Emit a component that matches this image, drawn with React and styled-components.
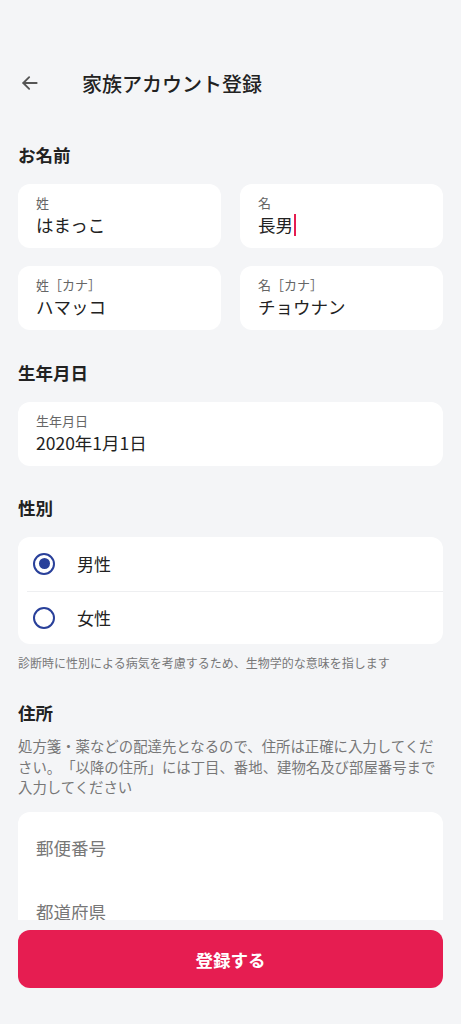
import React, { useState } from 'react';
import styled, { createGlobalStyle } from 'styled-components';

const GlobalStyle = createGlobalStyle`
  html, body {
    margin: 0;
    padding: 0;
    background: #f4f5f7;
  }
  body {
    font-family: "Noto Sans CJK JP", "Noto Sans", sans-serif;
    color: #222;
    text-spacing-trim: space-all;
  }
  * { box-sizing: border-box; }
`;

const App = () => {
    const [gender, setGender] = useState('male');

    return (
        <Page>
            <GlobalStyle />
            <Scroll>
                <Header>
                    <BackButton aria-label="戻る">
                        <svg width="20" height="20" viewBox="0 0 24 24" fill="none" stroke="#555" strokeWidth="2.2" strokeLinecap="round" strokeLinejoin="round">
                            <path d="M20 12H4" />
                            <path d="M11 5l-7 7 7 7" />
                        </svg>
                    </BackButton>
                    <HeaderTitle>家族アカウント登録</HeaderTitle>
                </Header>

                <Section $gap={32}>
                    <SectionTitle>お名前</SectionTitle>
                    <FieldGrid>
                        <Field>
                            <FieldLabel>姓</FieldLabel>
                            <FieldValue>はまっこ</FieldValue>
                        </Field>
                        <Field>
                            <FieldLabel>名</FieldLabel>
                            <FieldValue>長男<Caret /></FieldValue>
                        </Field>
                        <Field>
                            <FieldLabel>姓［カナ］</FieldLabel>
                            <FieldValue>ハマッコ</FieldValue>
                        </Field>
                        <Field>
                            <FieldLabel>名［カナ］</FieldLabel>
                            <FieldValue>チョウナン</FieldValue>
                        </Field>
                    </FieldGrid>
                </Section>

                <Section $gap={31}>
                    <SectionTitle>生年月日</SectionTitle>
                    <Field>
                        <FieldLabel>生年月日</FieldLabel>
                        <FieldValue>2020年1月1日</FieldValue>
                    </Field>
                </Section>

                <Section $gap={30}>
                    <SectionTitle>性別</SectionTitle>
                    <RadioCard>
                        <RadioRow onClick={() => setGender('male')}>
                            <RadioCircle $checked={gender === 'male'} />
                            <RadioLabel>男性</RadioLabel>
                        </RadioRow>
                        <RadioRow $divider onClick={() => setGender('female')}>
                            <RadioCircle $checked={gender === 'female'} />
                            <RadioLabel>女性</RadioLabel>
                        </RadioRow>
                    </RadioCard>
                    <Hint>診断時に性別による病気を考慮するため、生物学的な意味を指します</Hint>
                </Section>

                <Section $gap={29}>
                    <SectionTitle $tight>住所</SectionTitle>
                    <Description>
                        処方箋・薬などの配達先となるので、住所は正確に入力してください。「以降の住所」には丁目、番地、建物名及び部屋番号まで入力してください
                    </Description>
                    <AddressCard>
                        <Placeholder>郵便番号</Placeholder>
                        <Placeholder>都道府県</Placeholder>
                    </AddressCard>
                </Section>
            </Scroll>
            <Footer>
                <SubmitButton>登録する</SubmitButton>
            </Footer>
        </Page>
    );
};

const Page = styled.div`
  height: 100vh;
  display: flex;
  flex-direction: column;
  background: #f4f5f7;
`;

const Scroll = styled.div`
  flex: 1;
  overflow: hidden;
  padding: 55px 18px 0;
`;

const Header = styled.header`
  height: 56px;
  display: flex;
  align-items: center;
  gap: 42px;
  padding-left: 2px;
`;

const BackButton = styled.button`
  border: none;
  background: none;
  padding: 0;
  width: 20px;
  height: 20px;
  display: flex;
  align-items: center;
  justify-content: center;
`;

const HeaderTitle = styled.h1`
  margin: 0;
  font-size: 20px;
  font-weight: 500;
  color: #222;
`;

const Section = styled.section`
  margin-top: ${(p) => p.$gap}px;
`;

const SectionTitle = styled.h2`
  margin: 0 0 ${(p) => (p.$tight ? '11px' : '17px')};
  font-size: 17.5px;
  line-height: 24px;
  font-weight: 700;
  color: #222;
`;

const FieldGrid = styled.div`
  display: grid;
  grid-template-columns: 1fr 1fr;
  column-gap: 19px;
  row-gap: 18px;
`;

const Field = styled.div`
  height: 64px;
  background: #fff;
  border-radius: 12px;
  padding: 10px 18px 0;
`;

const FieldLabel = styled.div`
  font-size: 13px;
  line-height: 18px;
  color: #666;
`;

const FieldValue = styled.div`
  font-size: 17.5px;
  line-height: 26px;
  color: #222;
  display: flex;
  align-items: center;
`;

const Caret = styled.span`
  display: inline-block;
  width: 2px;
  height: 22px;
  margin-left: 1px;
  background: #e61d51;
`;

const RadioCard = styled.div`
  background: #fff;
  border-radius: 12px;
  overflow: hidden;
`;

const RadioRow = styled.label`
  height: 53.5px;
  display: flex;
  align-items: center;
  gap: 22px;
  margin-left: ${(p) => (p.$divider ? '9px' : '0')};
  padding-left: ${(p) => (p.$divider ? '6px' : '15px')};
  border-top: ${(p) => (p.$divider ? '1px solid #eeeff1' : 'none')};
  cursor: pointer;
`;

const RadioCircle = styled.span`
  width: 22px;
  height: 22px;
  border-radius: 50%;
  border: 2.5px solid #29409a;
  display: flex;
  align-items: center;
  justify-content: center;
  flex-shrink: 0;
  &::after {
    content: '';
    width: 11px;
    height: 11px;
    border-radius: 50%;
    background: #29409a;
    display: ${(p) => (p.$checked ? 'block' : 'none')};
  }
`;

const RadioLabel = styled.span`
  font-size: 17px;
  color: #222;
`;

const Hint = styled.p`
  margin: 10px 0 0;
  font-size: 12px;
  line-height: 18px;
  color: #777;
`;

const Description = styled.p`
  margin: 0 0 14px;
  font-size: 14.4px;
  line-height: 20.5px;
  color: #777;
`;

const AddressCard = styled.div`
  background: #fff;
  border-radius: 12px 12px 0 0;
  padding: 4px 18px 0;
`;

const Placeholder = styled.div`
  height: 64px;
  display: flex;
  align-items: center;
  font-size: 17.5px;
  color: #777;
`;

const Footer = styled.footer`
  flex-shrink: 0;
  padding: 10px 18px 36px;
  background: #f4f5f7;
`;

const SubmitButton = styled.button`
  width: 100%;
  height: 58px;
  border: none;
  border-radius: 12px;
  background: #e61d51;
  color: #fff;
  font-family: "Noto Sans CJK JP", "Noto Sans", sans-serif;
  font-size: 17.5px;
  font-weight: 700;
  cursor: pointer;
`;

export default App;
